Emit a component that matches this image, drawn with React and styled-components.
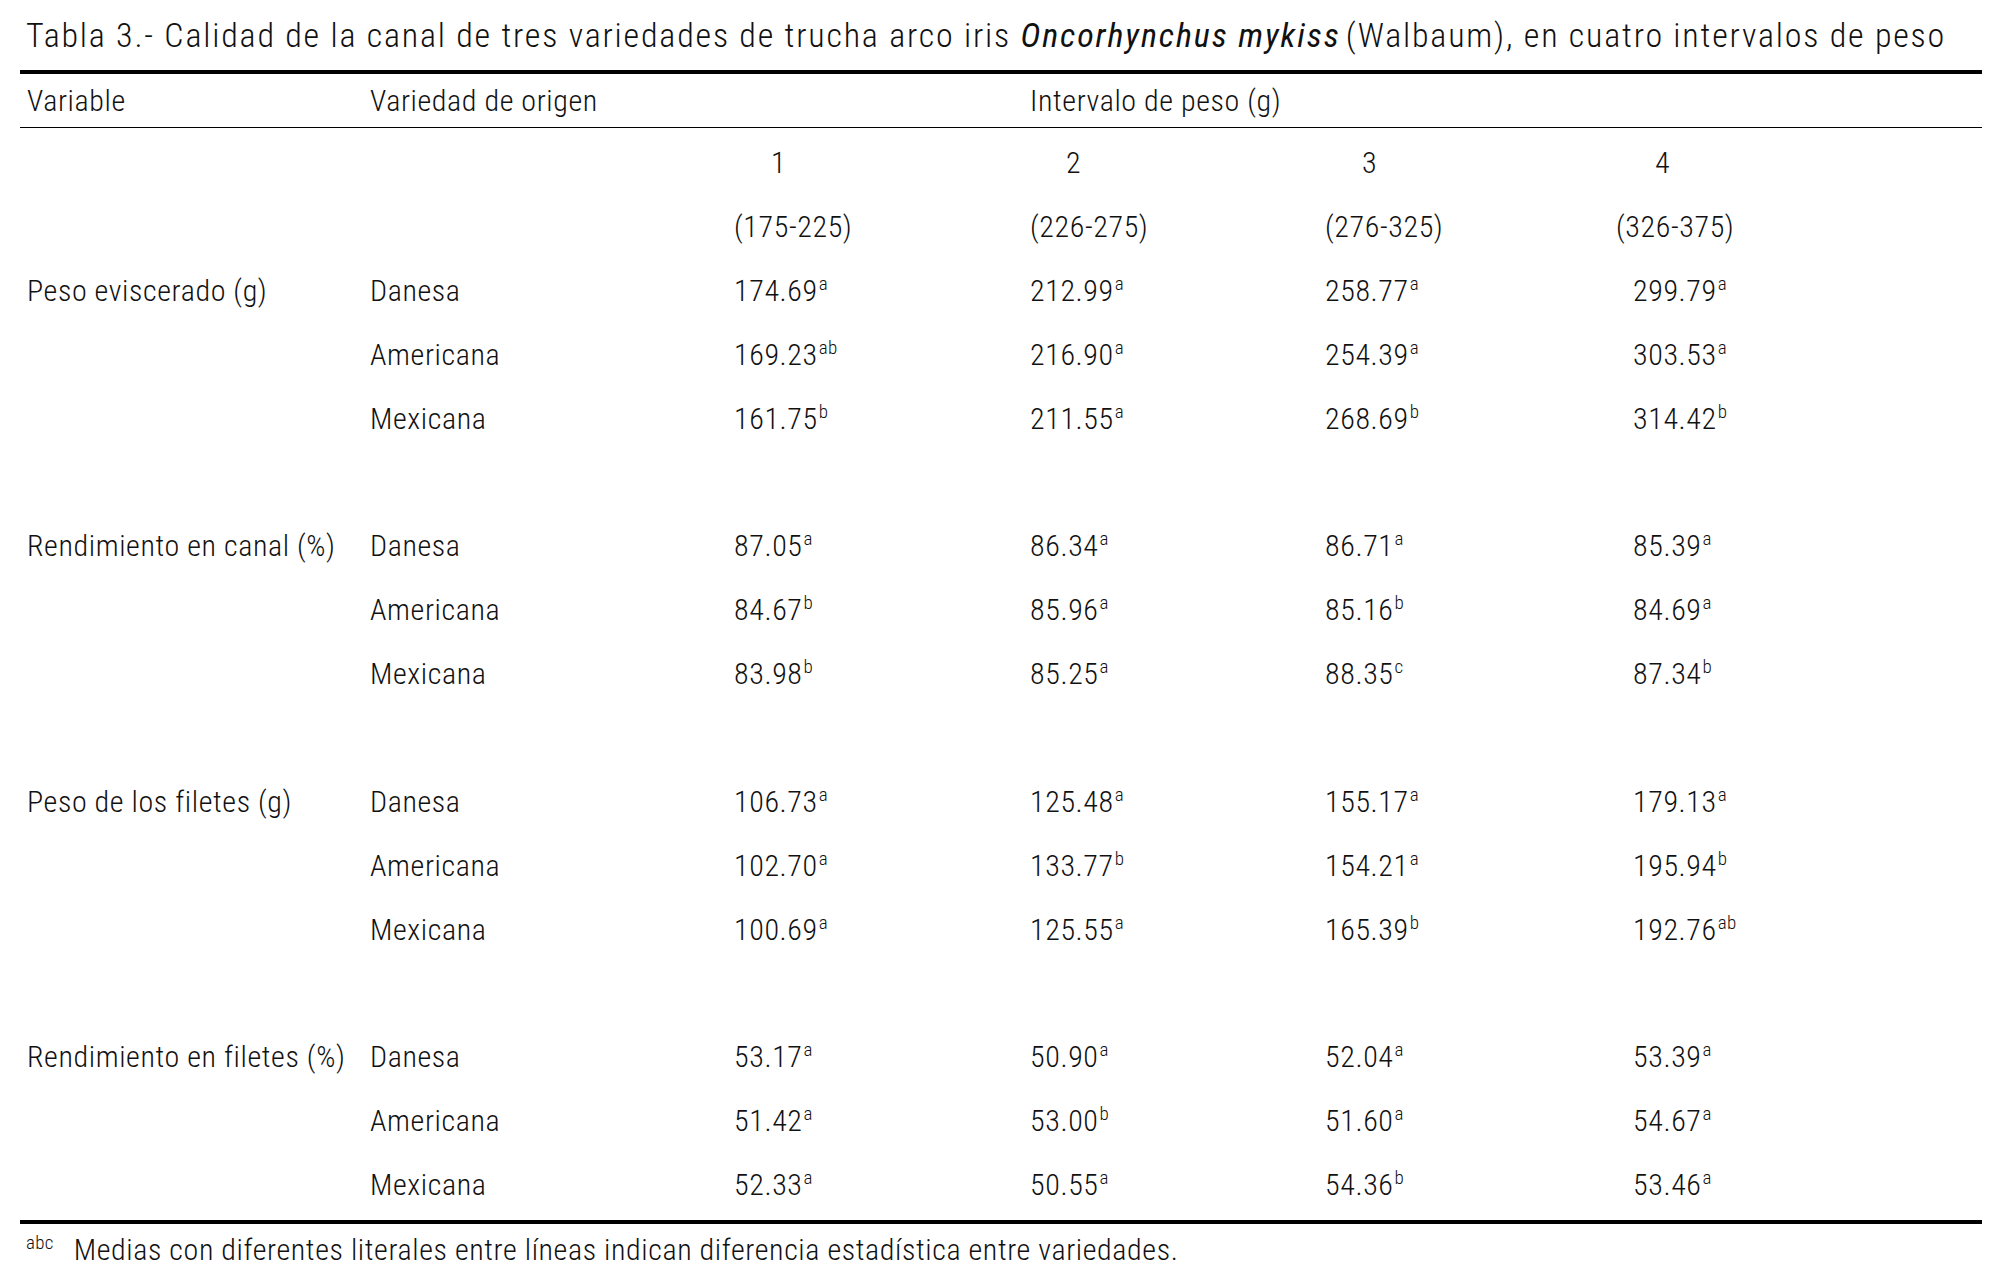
import React from "react";
import styled, { createGlobalStyle } from "styled-components";

const GlobalStyle = createGlobalStyle`
  html, body { margin: 0; padding: 0; background: #ffffff; }
  body {
    font-family: Roboto, "Liberation Sans", sans-serif;
    font-stretch: condensed;
    font-weight: 300;
    color: #111;
  }
`;

const COLS = "350px 364px 296px 295px 308px 1fr";
const ROW_H = "63.85px";

const Page = styled.div`
  width: 1962px;
  padding-left: 20px;
  font-size: 30px;
  letter-spacing: 0.6px;
`;

const Caption = styled.div`
  padding: 15px 0 15px 6px;
  font-size: 34px;
  letter-spacing: 1.8px;
  line-height: 40px;
  white-space: nowrap;
`;

const Species = styled.span`
  font-style: italic;
  font-weight: 400;
  letter-spacing: 1.9px;
  margin-right: 5px;
`;

const Table = styled.div`
  border-top: 4px solid #000;
  border-bottom: 4px solid #000;
`;

const HeadRow = styled.div`
  display: grid;
  grid-template-columns: ${COLS};
  align-items: center;
  height: 53px;
  border-bottom: 1px solid #000;
`;

const Body = styled.div`
  padding: 3px 0 4px;
`;

const Row = styled.div`
  display: grid;
  grid-template-columns: ${COLS};
  align-items: center;
  height: ${ROW_H};
`;

const Spacer = styled.div`
  height: ${ROW_H};
`;

const Cell = styled.div`
  white-space: nowrap;
  padding-left: ${(p) => p.$pad || 0}px;
  margin-left: ${(p) => p.$shift || 0}px;
  grid-column: ${(p) => p.$span || "auto"};
`;

const Sup = styled.sup`
  font-size: 19px;
  letter-spacing: 0.3px;
  vertical-align: 11px;
  line-height: 0;
  margin-left: 1px;
`;

const Footnote = styled.div`
  display: flex;
  align-items: baseline;
  padding: 6px 0 0 6px;
  line-height: 40px;
  white-space: nowrap;
`;

const FootMark = styled.span`
  font-size: 19px;
  position: relative;
  top: -11px;
  margin-right: 20px;
  letter-spacing: 0.3px;
`;

const groups = [
  {
    label: "Peso eviscerado (g)",
    rows: [
      ["Danesa", [["174.69", "a"], ["212.99", "a"], ["258.77", "a"], ["299.79", "a"]]],
      ["Americana", [["169.23", "ab"], ["216.90", "a"], ["254.39", "a"], ["303.53", "a"]]],
      ["Mexicana", [["161.75", "b"], ["211.55", "a"], ["268.69", "b"], ["314.42", "b"]]],
    ],
  },
  {
    label: "Rendimiento en canal (%)",
    rows: [
      ["Danesa", [["87.05", "a"], ["86.34", "a"], ["86.71", "a"], ["85.39", "a"]]],
      ["Americana", [["84.67", "b"], ["85.96", "a"], ["85.16", "b"], ["84.69", "a"]]],
      ["Mexicana", [["83.98", "b"], ["85.25", "a"], ["88.35", "c"], ["87.34", "b"]]],
    ],
  },
  {
    label: "Peso de los filetes (g)",
    rows: [
      ["Danesa", [["106.73", "a"], ["125.48", "a"], ["155.17", "a"], ["179.13", "a"]]],
      ["Americana", [["102.70", "a"], ["133.77", "b"], ["154.21", "a"], ["195.94", "b"]]],
      ["Mexicana", [["100.69", "a"], ["125.55", "a"], ["165.39", "b"], ["192.76", "ab"]]],
    ],
  },
  {
    label: "Rendimiento en filetes (%)",
    rows: [
      ["Danesa", [["53.17", "a"], ["50.90", "a"], ["52.04", "a"], ["53.39", "a"]]],
      ["Americana", [["51.42", "a"], ["53.00", "b"], ["51.60", "a"], ["54.67", "a"]]],
      ["Mexicana", [["52.33", "a"], ["50.55", "a"], ["54.36", "b"], ["53.46", "a"]]],
    ],
  },
];

const intervals = [
  ["1", "(175-225)", 37, 0],
  ["2", "(226-275)", 36, 0],
  ["3", "(276-325)", 37, 0],
  ["4", "(326-375)", 22, -17],
];

export default function App() {
  return (
    <>
      <GlobalStyle />
      <Page>
        <Caption>
          Tabla 3.- Calidad de la canal de tres variedades de trucha arco iris{" "}
          <Species>Oncorhynchus mykiss</Species>(Walbaum), en cuatro intervalos de peso
        </Caption>
        <Table>
          <HeadRow>
            <Cell $pad={7}>Variable</Cell>
            <Cell>Variedad de origen</Cell>
            <Cell $span="3 / 7" $shift={296}>
              Intervalo de peso (g)
            </Cell>
          </HeadRow>
          <Body>
            <Row>
              <Cell />
              <Cell />
              {intervals.map(([n, , pad]) => (
                <Cell key={n} $pad={pad}>
                  {n}
                </Cell>
              ))}
            </Row>
            <Row>
              <Cell />
              <Cell />
              {intervals.map(([n, r, , shift]) => (
                <Cell key={n} $shift={shift}>
                  {r}
                </Cell>
              ))}
            </Row>
            {groups.map((g, gi) => (
              <React.Fragment key={g.label}>
                {gi > 0 && <Spacer />}
                {g.rows.map(([variety, vals], ri) => (
                  <Row key={variety}>
                    <Cell $pad={7}>{ri === 0 ? g.label : ""}</Cell>
                    <Cell>{variety}</Cell>
                    {vals.map(([v, s], ci) => (
                      <Cell key={ci}>
                        {v}
                        <Sup>{s}</Sup>
                      </Cell>
                    ))}
                  </Row>
                ))}
              </React.Fragment>
            ))}
          </Body>
        </Table>
        <Footnote>
          <FootMark>abc</FootMark>
          Medias con diferentes literales entre líneas indican diferencia estadística entre variedades.
        </Footnote>
      </Page>
    </>
  );
}
